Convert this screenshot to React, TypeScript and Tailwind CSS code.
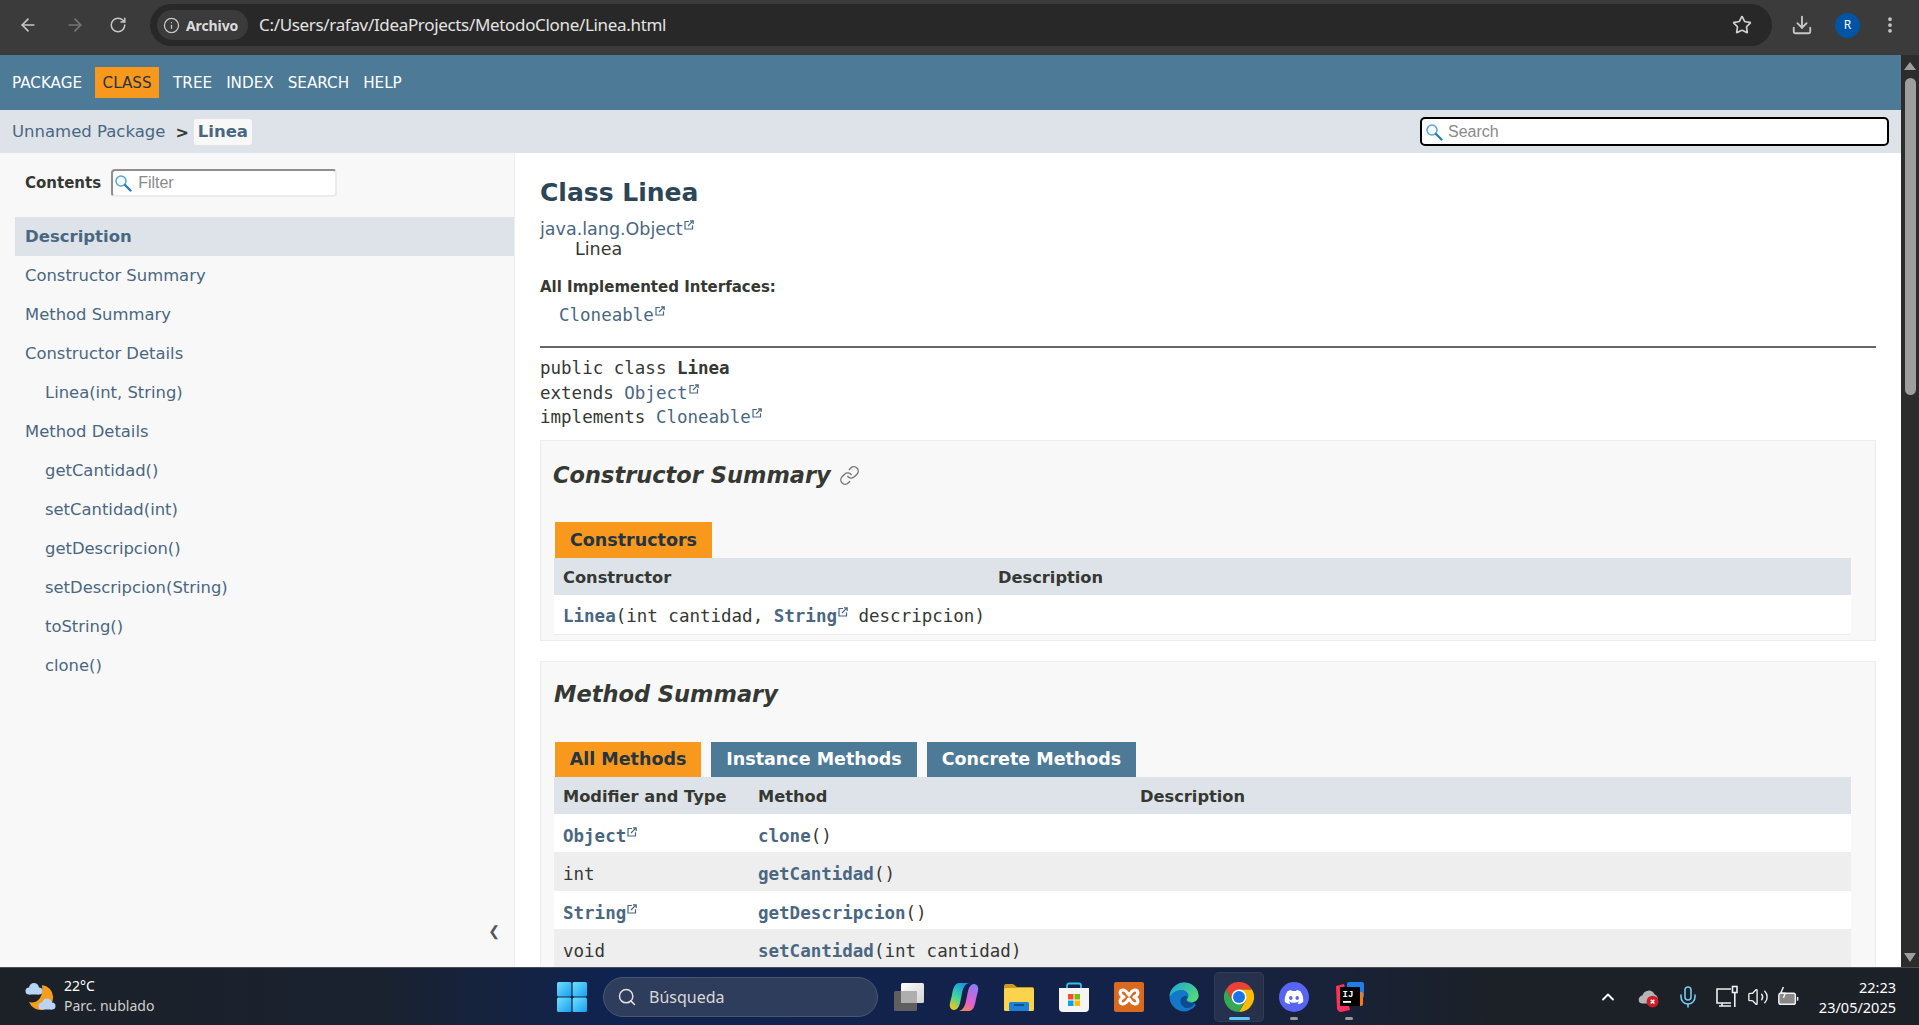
import { Link as LinkIcon, ArrowLeft, ArrowRight, RotateCw, Info, Star, Download, EllipsisVertical, ChevronUp, Mic, Search as SearchGlyph, Volume2 } from 'lucide-react';

const SANS = 'font-["DejaVu_Sans",sans-serif]';
const MONO = 'font-["DejaVu_Sans_Mono",monospace]';

function ExternalMark() {
  return (
    <svg viewBox="0 0 10 10" className="inline-block w-[10px] h-[10px] align-[5px] ml-[1px]" fill="none" stroke="#4a6782" strokeWidth="1.2">
      <path d="M5 1.500H1v7.500h7.500V5.200" />
      <path d="M4 6l4.800-4.800M6 .8h3.200v3.200" />
    </svg>
  );
}

function Magnifier({ className }: { className: string }) {
  return (
    <svg viewBox="0 0 18 18" className={className} fill="none">
      <circle cx="7" cy="7" r="5" stroke="#5aa6d0" strokeWidth="1.500" fill="#f4fafd" />
      <path d="M11 11l5.500 5.500" stroke="#2a7fb0" strokeWidth="2.400" strokeLinecap="round" />
    </svg>
  );
}

function ChromeBar() {
  return (
    <header className="h-[55px] shrink-0 bg-[#3b3b3b] flex items-start text-[#c7c7c7] font-['Noto_Sans',sans-serif]">
      <div className="w-[150px] h-[50px] flex items-center">
        <ArrowLeft className="w-[20px] h-[20px] ml-[18px]" strokeWidth={2} />
        <ArrowRight className="w-[20px] h-[20px] ml-[27px] text-[#767676]" strokeWidth={2} />
        <RotateCw className="w-[18px] h-[18px] ml-[24px]" strokeWidth={2} />
      </div>
      <div className="mt-[4px] w-[1622px] h-[42px] rounded-full bg-[#282828] flex items-center pl-[7px]">
        <div className="h-[30px] w-[91px] rounded-full bg-[#3b3b3b] flex items-center pl-[6px] gap-[6px]">
          <Info className="w-[17px] h-[17px]" strokeWidth={1.800} />
          <span className="text-[14px] font-bold tracking-[-0.1px] text-[#dcdcdc]">Archivo</span>
        </div>
        <span className="ml-[11px] text-[17px] tracking-[-0.33px] text-[#e3e3e3]">C:/Users/rafav/IdeaProjects/MetodoClone/Linea.html</span>
        <Star className="w-[20px] h-[20px] ml-auto mr-[20px] text-[#d0d0d0]" strokeWidth={2} />
      </div>
      <div className="h-[50px] flex-1 flex items-center">
        <Download className="w-[22px] h-[22px] ml-[19px]" strokeWidth={2} />
        <div className="ml-[22px] w-[25px] h-[25px] rounded-full bg-[#0054a6] flex items-center justify-center text-[12px] text-white">R</div>
        <EllipsisVertical className="w-[20px] h-[20px] ml-[20px]" strokeWidth={2.500} />
      </div>
    </header>
  );
}

function TopNav() {
  const items = [
    { label: 'PACKAGE', active: false },
    { label: 'CLASS', active: true },
    { label: 'TREE', active: false },
    { label: 'INDEX', active: false },
    { label: 'SEARCH', active: false },
    { label: 'HELP', active: false },
  ];
  return (
    <nav className={`h-[55px] shrink-0 bg-[#4d7a97] flex items-center pl-[12px] text-[15.2px] text-white ${SANS}`}>
      {items.map((it) =>
        it.active ? (
          <span key={it.label} className="-ml-[1px] mr-[14px] h-[31px] w-[64px] pt-[2px] bg-[#f8981d] text-[#253441] flex items-center justify-center">
            {it.label}
          </span>
        ) : (
          <span key={it.label} className="mr-[14px] pt-[2px]">{it.label}</span>
        ),
      )}
    </nav>
  );
}

function SubNav() {
  return (
    <div className={`h-[43px] shrink-0 bg-[#dee3e9] flex items-center pl-[12px] pr-[12px] ${SANS}`}>
      <span className="pt-[2px] text-[16.5px] text-[#4a6782]">Unnamed Package</span>
      <span className="ml-[10px] pt-[2px] text-[16px] font-bold text-[#353833]">&gt;</span>
      <span className="ml-[5px] h-[26px] w-[58px] pt-[2px] rounded-[3px] bg-[#f8f8f8] flex items-center justify-center text-[16.5px] font-bold text-[#4a6782]">Linea</span>
      <div className="ml-auto w-[469px] h-[29px] rounded-[5px] border-2 border-black bg-white flex items-center pl-[3px] font-['Liberation_Sans',sans-serif]">
        <Magnifier className="w-[18px] h-[18px]" />
        <span className="ml-[5px] text-[16px] text-[#8a8a8a]">Search</span>
      </div>
    </div>
  );
}

const TOC = [
  { label: 'Constructor Summary', sub: false },
  { label: 'Method Summary', sub: false },
  { label: 'Constructor Details', sub: false },
  { label: 'Linea(int, String)', sub: true },
  { label: 'Method Details', sub: false },
  { label: 'getCantidad()', sub: true },
  { label: 'setCantidad(int)', sub: true },
  { label: 'getDescripcion()', sub: true },
  { label: 'setDescripcion(String)', sub: true },
  { label: 'toString()', sub: true },
  { label: 'clone()', sub: true },
];

function Sidebar() {
  return (
    <aside className={`w-[515px] shrink-0 bg-[#f8f8f8] border-r border-[#ededed] flex flex-col ${SANS}`}>
      <div className="h-[64px] flex items-start pt-[16px] pl-[25px]">
        <span className="h-[28px] flex items-center text-[15px] font-bold text-[#353833]">Contents</span>
        <div className="ml-[10px] w-[226px] h-[28px] rounded-[4px] bg-white border-2 border-[#ececec] border-t-[#8f8f8f] border-l-[#8f8f8f] flex items-center pl-[1px] font-['Liberation_Sans',sans-serif]">
          <Magnifier className="w-[18px] h-[18px]" />
          <span className="ml-[6px] text-[16px] text-[#8a8a8a]">Filter</span>
        </div>
      </div>
      <div className="ml-[15px] h-[39px] pt-[2px] bg-[#dee3e9] flex items-center pl-[10px] text-[16.5px] font-bold text-[#4a6782]">Description</div>
      {TOC.map((t) => (
        <div key={t.label} className={`h-[39px] pt-[2px] flex items-center text-[16.4px] text-[#4a6782] ${t.sub ? 'pl-[45px]' : 'pl-[25px]'}`}>
          {t.label}
        </div>
      ))}
      <div className="mt-auto mb-[26px] mr-[14px] text-right text-[14px] leading-[20px] text-[#555555]">❮</div>
    </aside>
  );
}

function Tab({ label, active, width, h }: { label: string; active: boolean; width: string; h: string }) {
  return (
    <div className={`${width} ${h} flex items-center justify-center text-[17.5px] font-bold ${active ? 'bg-[#f8981d] text-[#253441]' : 'bg-[#4d7a97] text-white'}`}>
      {label}
    </div>
  );
}

function Code({ children }: { children: React.ReactNode }) {
  return <span className={`${MONO} text-[17.5px]`}>{children}</span>;
}

function Ref({ children, external }: { children: React.ReactNode; external?: boolean }) {
  return (
    <span className="font-bold text-[#4a6782]">
      {children}
      {external && <ExternalMark />}
    </span>
  );
}

function MethodRow({ type, typeLink, name, args, alt }: { type: string; typeLink?: boolean; name: string; args: string; alt?: boolean }) {
  return (
    <div className={`h-[38.25px] pt-[6px] grid grid-cols-[195px_382px_1fr] items-center pl-[9px] text-[#353833] ${alt ? 'bg-[#eeeeef]' : 'bg-white'}`}>
      <Code>{typeLink ? <Ref external>{type}</Ref> : type}</Code>
      <Code><Ref>{name}</Ref>({args})</Code>
      <span />
    </div>
  );
}

function MainContent() {
  return (
    <main className={`flex-1 h-full overflow-hidden bg-white px-[25px] pt-[23px] text-[#353833] ${SANS}`}>
      <h1 className="text-[25px] leading-[34px] font-bold text-[#2c4557]">Class Linea</h1>
      <div className="mt-[9px] text-[17.5px] leading-[20px] text-[#4a6782]">java.lang.Object<ExternalMark /></div>
      <div className="pl-[35px] text-[17.5px] leading-[20px] text-[#353833]">Linea</div>
      <div className="mt-[18px] text-[15px] leading-[20px] font-bold">All Implemented Interfaces:</div>
      <div className={`mt-[8px] pl-[19px] ${MONO} text-[17.5px] leading-[20px] text-[#4a6782]`}>Cloneable<ExternalMark /></div>
      <hr className="mt-[21px] h-[2px] border-0 bg-[#666666]" />
      <div className={`mt-[8px] ${MONO} text-[17.5px] leading-[24.5px]`}>
        <div>public class <b>Linea</b></div>
        <div>extends <span className="text-[#4a6782]">Object<ExternalMark /></span></div>
        <div>implements <span className="text-[#4a6782]">Cloneable<ExternalMark /></span></div>
      </div>

      {/* Constructor Summary */}
      <section className="mt-[10.5px] h-[201px] bg-[#f8f8f8] border border-[#ededed] pl-[13px] pr-[24px] pt-[18px]">
        <h2 className="-ml-[1px] h-[34px] flex items-center text-[22.5px] font-bold italic text-[#353833]">
          Constructor Summary
          <LinkIcon className="ml-[8px] -mt-[2px] w-[21px] h-[21px] text-[#777777]" strokeWidth={1.600} />
        </h2>
        <div className="mt-[29px] ml-[1px] flex">
          <Tab label="Constructors" active width="w-[157px]" h="h-[36px]" />
        </div>
        <div className="h-[37px] pt-[3px] bg-[#dee3e9] grid grid-cols-[435px_1fr] items-center pl-[9px] text-[16.25px] font-bold">
          <span>Constructor</span>
          <span>Description</span>
        </div>
        <div className="h-[40px] pt-[4px] bg-white border-b border-[#ededed] flex items-center pl-[9px]">
          <Code><Ref>Linea</Ref>(int cantidad, <Ref external>String</Ref> descripcion)</Code>
        </div>
      </section>

      {/* Method Summary */}
      <section className="mt-[20px] bg-[#f8f8f8] border border-[#ededed] pl-[13px] pr-[24px] pt-[16px]">
        <h2 className="h-[34px] flex items-center text-[22.5px] font-bold italic text-[#353833]">Method Summary</h2>
        <div className="mt-[30px] ml-[1px] flex gap-[10px]">
          <Tab label="All Methods" active width="w-[146px]" h="h-[35px]" />
          <Tab label="Instance Methods" active={false} width="w-[206px]" h="h-[35px]" />
          <Tab label="Concrete Methods" active={false} width="w-[209px]" h="h-[35px]" />
        </div>
        <div className="h-[37px] pt-[4px] bg-[#dee3e9] grid grid-cols-[195px_382px_1fr] items-center pl-[9px] text-[16.25px] font-bold">
          <span>Modifier and Type</span>
          <span>Method</span>
          <span>Description</span>
        </div>
        <MethodRow type="Object" typeLink name="clone" args="" />
        <MethodRow type="int" name="getCantidad" args="" alt />
        <MethodRow type="String" typeLink name="getDescripcion" args="" />
        <MethodRow type="void" name="setCantidad" args="int cantidad" alt />
      </section>
    </main>
  );
}

function Scrollbar() {
  return (
    <div className="w-[18px] shrink-0 bg-[#2c2c2c] flex flex-col items-center">
      <div className="mt-[7px] w-0 h-0 border-x-[6px] border-x-transparent border-b-[8px] border-b-[#9e9e9e]" />
      <div className="mt-[8px] w-[11px] h-[317px] rounded-full bg-[#9e9e9e]" />
      <div className="mt-auto mb-[5px] w-0 h-0 border-x-[6px] border-x-transparent border-t-[9px] border-t-[#9e9e9e]" />
    </div>
  );
}

/* Taskbar drawings */

function WindowsLogo() {
  return (
    <svg viewBox="0 0 30 30" className="w-[30px] h-[30px]">
      <defs>
        <linearGradient id="win" x1="0" y1="0" x2="1" y2="1">
          <stop offset="0" stopColor="#6fe0fb" />
          <stop offset="1" stopColor="#1a9df0" />
        </linearGradient>
      </defs>
      <rect x="0" y="0" width="14.400" height="14.400" rx="1.500" fill="url(#win)" />
      <rect x="15.600" y="0" width="14.400" height="14.400" rx="1.500" fill="url(#win)" />
      <rect x="0" y="15.600" width="14.400" height="14.400" rx="1.500" fill="url(#win)" />
      <rect x="15.600" y="15.600" width="14.400" height="14.400" rx="1.500" fill="url(#win)" />
    </svg>
  );
}

function TaskView() {
  return (
    <svg viewBox="0 0 30 30" className="w-[30px] h-[30px]">
      <defs>
        <linearGradient id="tv" x1="0" y1="0" x2="1" y2="1">
          <stop offset="0" stopColor="#ffffff" />
          <stop offset="1" stopColor="#d2d2d2" />
        </linearGradient>
      </defs>
      <rect x="7" y="1" width="23" height="20" rx="1.500" fill="url(#tv)" />
      <rect x="0" y="9" width="23" height="20" rx="1.500" fill="#5f5f5f" />
      <rect x="7" y="9" width="16" height="12" fill="#aeaeae" />
    </svg>
  );
}

function Copilot() {
  return (
    <svg viewBox="0 0 30 30" className="w-[30px] h-[30px]">
      <defs>
        <linearGradient id="cpa" x1="0.700" y1="0" x2="0.200" y2="1">
          <stop offset="0" stopColor="#1d8fe8" />
          <stop offset="0.550" stopColor="#3dd6a0" />
          <stop offset="1" stopColor="#f5c518" />
        </linearGradient>
        <linearGradient id="cpb" x1="0.700" y1="0" x2="0.200" y2="1">
          <stop offset="0" stopColor="#8a7cf5" />
          <stop offset="0.600" stopColor="#e45fd0" />
          <stop offset="1" stopColor="#f58a4b" />
        </linearGradient>
      </defs>
      <path d="M10 1h10c-4 1-6 5-7 10l-2 10c-1 4-3 7-6 7-3 0-5-3-4-7l2-8C4 6 6 1 10 1z" fill="url(#cpa)" />
      <path d="M20 29H10c4-1 6-5 7-10l2-10c1-4 3-7 6-7 3 0 5 3 4 7l-2 8C26 24 24 29 20 29z" fill="url(#cpb)" />
    </svg>
  );
}

function Explorer() {
  return (
    <svg viewBox="0 0 30 30" className="w-[30px] h-[30px]">
      <path d="M0 4a2 2 0 012-2h7l4 3h15a2 2 0 012 2v3H0z" fill="#cf9a1c" />
      <rect x="0" y="6" width="30" height="23" rx="1.500" fill="#fcd34d" />
      <rect x="5" y="20" width="20" height="9" rx="1.500" fill="#1b82d6" />
      <rect x="10" y="22" width="10" height="2" fill="#0c4f96" />
    </svg>
  );
}

function StoreIcon() {
  return (
    <svg viewBox="0 0 30 30" className="w-[30px] h-[30px]">
      <path d="M8 6V3.500A2 2 0 0110 1.500h10a2 2 0 012 2V6" fill="none" stroke="#2fc0ee" strokeWidth="1.800" />
      <path d="M0 6h30v20a4 4 0 01-4 4H4a4 4 0 01-4-4z" fill="#f5f5f5" />
      <rect x="9" y="12" width="5.500" height="5.500" fill="#f25022" />
      <rect x="15.500" y="12" width="5.500" height="5.500" fill="#7fba00" />
      <rect x="9" y="18.500" width="5.500" height="5.500" fill="#00a4ef" />
      <rect x="15.500" y="18.500" width="5.500" height="5.500" fill="#ffb900" />
    </svg>
  );
}

function Xampp() {
  return (
    <svg viewBox="0 0 30 30" className="w-[30px] h-[30px]">
      <rect x="0" y="0" width="30" height="30" rx="2" fill="#d9691e" />
      <path d="M9 8c-4 0-4 5 1 7-5 2-5 7-1 7 3 0 4-3 6-5 2 2 3 5 6 5 4 0 4-5-1-7 5-2 5-7 1-7-3 0-4 3-6 5-2-2-3-5-6-5z" fill="#d9691e" stroke="#ffffff" strokeWidth="3.200" strokeLinejoin="round" />
    </svg>
  );
}

function Edge() {
  return (
    <svg viewBox="0 0 30 30" className="w-[30px] h-[30px]">
      <defs>
        <linearGradient id="edg" x1="0" y1="0" x2="1" y2="0.700">
          <stop offset="0" stopColor="#1ea5d8" />
          <stop offset="1" stopColor="#52d97a" />
        </linearGradient>
      </defs>
      <path d="M.5 15C.5 7 7 .5 15 .5c8 0 14.500 6 14.500 13 0 4-3 6.500-6 6.500l3.500 3A14.500 14.500 0 01.5 15z" fill="#1478c8" />
      <path d="M.5 14C2 5 9 .5 15 .5c8 0 14.500 6 14.500 13 0 4-3 6.500-6.500 6.500-3 0-5-1-5-2.500 0-1 1.500-1.500 1.500-4 0-3-3-5.500-7-5.500-5 0-9 2.500-11.500 6z" fill="url(#edg)" />
      <path d="M12 22c-2-5 2-9 6-8 1 1 .5 2-.5 3-1 2 2 4 6 4 1 0 2 0 3 0-2 3-5 5-9 5-2 0-4-2-5.500-4z" fill="#0d4c8c" />
    </svg>
  );
}

function ChromeLogo() {
  return (
    <svg viewBox="0 0 30 30" className="w-[30px] h-[30px]">
      <path d="M2 7.500A15 15 0 0128 7.500H15L8.500 18.750z" fill="#ea4335" />
      <path d="M28 7.500A15 15 0 0115 30l6.500-11.250L15 7.500z" fill="#fbbc04" />
      <path d="M15 30A15 15 0 012 7.500l6.500 11.250h13z" fill="#34a853" />
      <circle cx="15" cy="15" r="7.500" fill="#ffffff" />
      <circle cx="15" cy="15" r="6" fill="#1a73e8" />
    </svg>
  );
}

function DiscordLogo() {
  return (
    <svg viewBox="0 0 30 30" className="w-[30px] h-[30px]">
      <circle cx="15" cy="15" r="15" fill="#5865f2" />
      <path d="M21.500 9.300a15 15 0 00-3.800-1.200l-.5 1a14 14 0 00-4.400 0l-.5-1a15 15 0 00-3.800 1.200C6.100 13 5.400 16.500 5.800 20a15 15 0 004.600 2.300l1-1.600-1.600-.8.400-.3a10.700 10.700 0 009.600 0l.4.300-1.600.8 1 1.600a15 15 0 004.600-2.300c.5-4-.6-7.500-2.700-10.700zM11.800 18c-.9 0-1.700-.9-1.700-2s.7-2 1.700-2 1.700.9 1.700 2-.8 2-1.700 2zm6.400 0c-.9 0-1.700-.9-1.700-2s.7-2 1.700-2 1.700.9 1.700 2-.8 2-1.700 2z" fill="#ffffff" />
    </svg>
  );
}

function JetBrains() {
  return (
    <svg viewBox="0 0 30 30" className="w-[30px] h-[30px]">
      <rect x="13" y="0" width="17" height="16" rx="2" fill="#1f7fe6" />
      <rect x="18" y="10" width="11" height="14" rx="2" fill="#f97a12" />
      <path d="M2 4l8-2 6 26-9 2c-2 0-3-1-4-3z" fill="#fe315d" />
      <rect x="6" y="5" width="20" height="19" fill="#000000" />
      <rect x="9" y="19" width="8" height="1.800" fill="#ffffff" />
      <text x="8.500" y="15" fontSize="9" fontWeight="700" fill="#ffffff" fontFamily="Liberation Mono, monospace">IJ</text>
    </svg>
  );
}

function WeatherIcon() {
  return (
    <svg viewBox="0 0 32 32" className="w-[32px] h-[32px]">
      <path d="M18 4A12.500 12.500 0 115 21C12 23 20 18 18 4z" fill="#f59e1b" />
      <g fill="#b9d4f6">
        <circle cx="5" cy="10" r="3.500" />
        <circle cx="10" cy="7" r="5" />
        <circle cx="15" cy="10" r="3.500" />
        <rect x="5" y="9" width="10" height="4.500" />
      </g>
      <g fill="#b9d4f6">
        <circle cx="18" cy="25" r="3.500" />
        <circle cx="23" cy="22.500" r="5" />
        <circle cx="28" cy="25" r="3.500" />
        <rect x="18" y="24.500" width="10" height="4" />
      </g>
    </svg>
  );
}

function Taskbar() {
  const apps = [
    { id: 'taskview', icon: <TaskView /> },
    { id: 'copilot', icon: <Copilot /> },
    { id: 'explorer', icon: <Explorer /> },
    { id: 'store', icon: <StoreIcon /> },
    { id: 'xampp', icon: <Xampp /> },
    { id: 'edge', icon: <Edge /> },
    { id: 'chrome', icon: <ChromeLogo />, active: true },
    { id: 'discord', icon: <DiscordLogo />, open: true },
    { id: 'jetbrains', icon: <JetBrains />, open: true },
  ];
  return (
    <footer className="h-[58px] shrink-0 border-t border-[#4a4d52] bg-[linear-gradient(90deg,#1c2128_0%,#1a2230_20%,#0f2350_32%,#142248_60%,#1c2128_78%,#1c2128_100%)] flex items-center font-['Noto_Sans',sans-serif] text-white">
      <div className="w-[24px]" />
      <WeatherIcon />
      <div className="ml-[8px] mb-[2px] w-[100px] text-[14px] leading-[20px]">
        <div>22°C</div>
        <div className="text-[#cfcfcf]">Parc. nublado</div>
      </div>
      <div className="ml-[393px]"><WindowsLogo /></div>
      <div className="ml-[16px] w-[275px] h-[40px] rounded-full bg-[#2f3d5c] border border-[#4a5672] flex items-center pl-[13px]">
        <SearchGlyph className="w-[20px] h-[20px] text-[#e0e0e0]" strokeWidth={1.800} />
        <span className="ml-[12px] text-[16px] text-[#d8d8d8]">Búsqueda</span>
      </div>
      <div className="ml-[3px] flex">
        {apps.map((a) => (
          <div key={a.id} className="relative w-[55px] h-[50px] flex items-center justify-center">
            {a.active && <span className="absolute inset-y-0 left-[3px] right-[2px] rounded-[5px] bg-white/7 border border-white/5" />}
            <span className="relative">{a.icon}</span>
            {a.active && <span className="absolute bottom-[2px] left-[18px] w-[21px] h-[3px] rounded-full bg-[#5cc8f7]" />}
            {a.open && <span className="absolute bottom-[2px] left-[24px] w-[8px] h-[3px] rounded-full bg-[#9a9a9a]" />}
          </div>
        ))}
      </div>
      <div className="ml-[222px] flex items-center">
        <ChevronUp className="w-[20px] h-[20px]" strokeWidth={2.200} />
        <svg viewBox="0 0 24 24" className="ml-[19px] w-[22px] h-[22px]">
          <path d="M2 16a5 5 0 014-6 7 7 0 0113-1 5 5 0 013 7c0 2-1 3-3 3H6c-2 0-4-1-4-3z" fill="#b5b5b5" />
          <circle cx="17" cy="17" r="6.500" fill="#d01c28" />
          <path d="M15 15l4 4M19 15l-4 4" stroke="#ffffff" strokeWidth="1.600" />
        </svg>
        <Mic className="ml-[17px] w-[24px] h-[24px] text-[#76c9ee]" strokeWidth={1.600} />
        <svg viewBox="0 0 24 24" className="ml-[15px] w-[24px] h-[24px]" fill="none" stroke="#f0f0f0" strokeWidth="1.600">
          <path d="M16 4H2v14h14M7 18v3M4 21h12" />
          <rect x="17.500" y="1.500" width="4.500" height="6" />
          <path d="M19.800 8v14" />
        </svg>
        <Volume2 className="ml-[8px] w-[22px] h-[22px] text-[#f0f0f0]" strokeWidth={1.500} />
        <svg viewBox="0 0 24 24" className="ml-[8px] w-[22px] h-[22px]" fill="none" stroke="#f0f0f0" strokeWidth="1.600">
          <rect x="2" y="8" width="18" height="12" rx="2" fill="#888888" />
          <path d="M22.500 12v4" />
          <path d="M7 1L4 8h5l-2 5" strokeLinejoin="round" />
        </svg>
      </div>
      <div className="ml-auto mr-[23px] text-right text-[14.5px] leading-[20px]">
        <div>22:23</div>
        <div>23/05/2025</div>
      </div>
    </footer>
  );
}

export default function App() {
  return (
    <div className="w-[1919px] h-[1025px] overflow-hidden flex flex-col">
      <ChromeBar />
      <div className="flex-1 min-h-0 flex">
        <div className="flex-1 min-w-0 flex flex-col">
          <TopNav />
          <SubNav />
          <div className="flex-1 min-h-0 flex">
            <Sidebar />
            <MainContent />
          </div>
        </div>
        <Scrollbar />
      </div>
      <Taskbar />
    </div>
  );
}
